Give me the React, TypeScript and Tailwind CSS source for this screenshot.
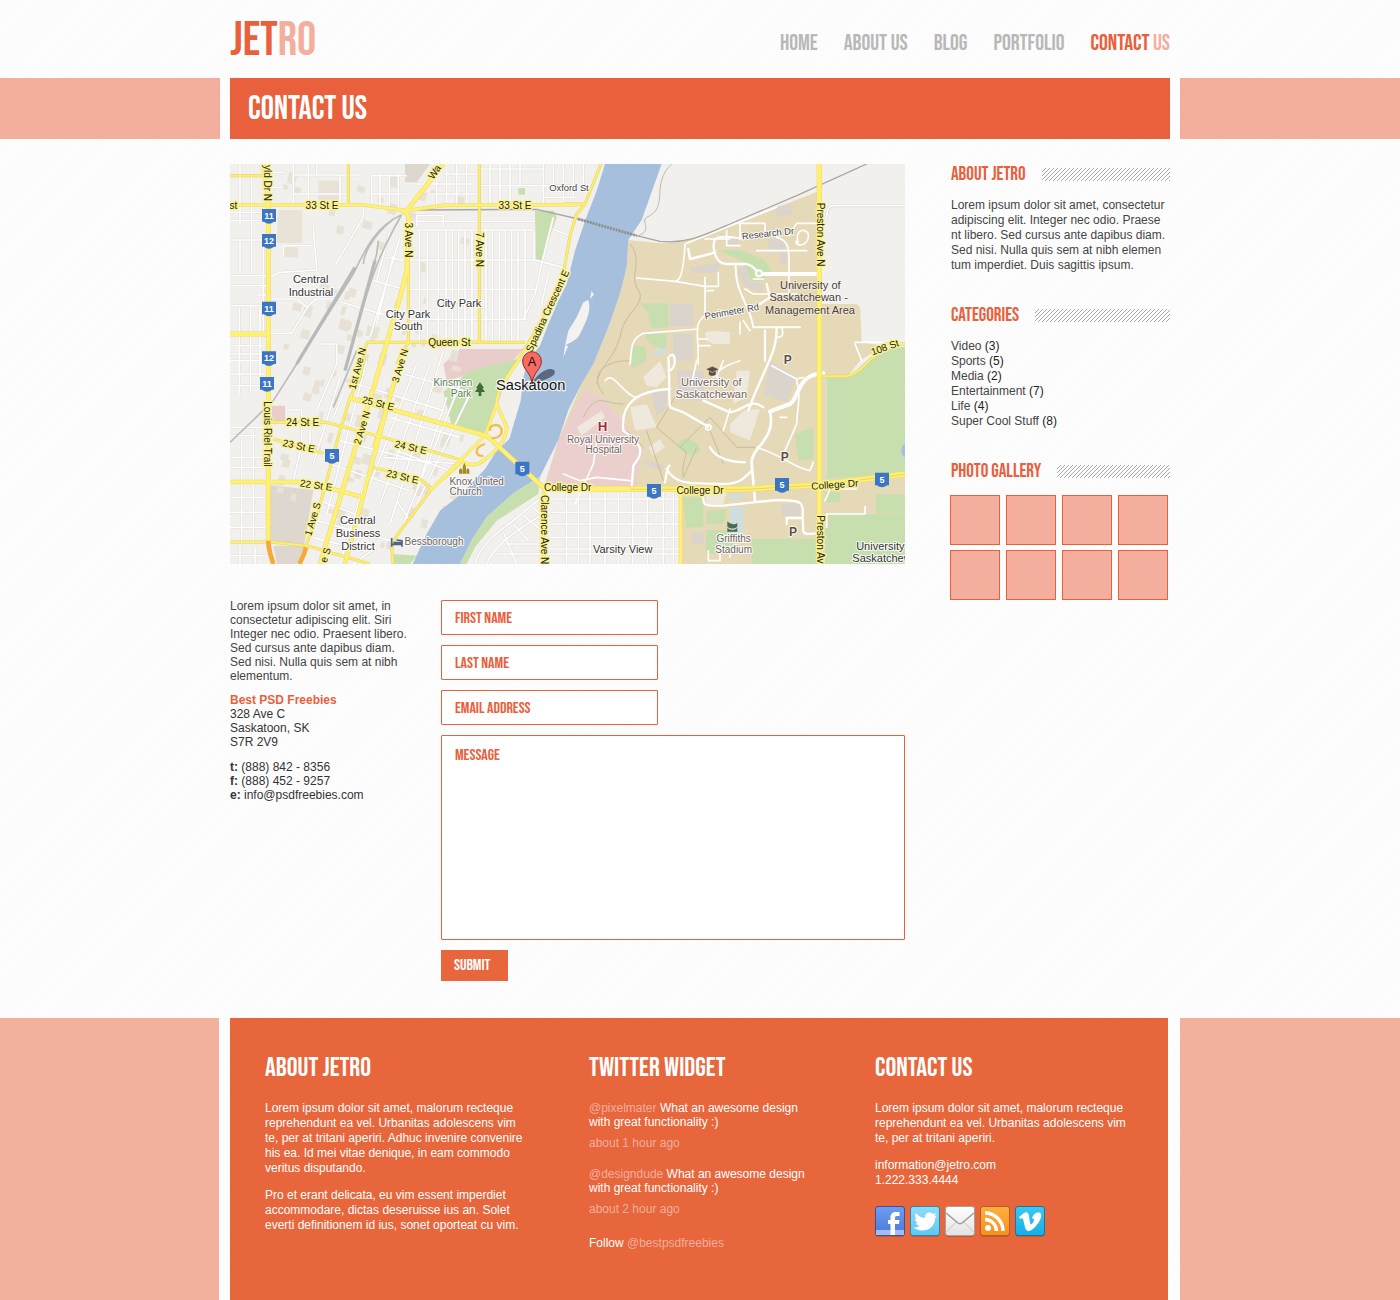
import type { ReactNode } from 'react';

const display = "font-['Bebas_Neue','Oswald',sans-serif] uppercase";

/* ---------- map ---------- */

type Line = [string, number?];

const streets: string[] = [
  // left blocks
  'M30 0V180M65 20V225M100 235V520', 'M0 145H100M0 170H100M0 228H110M0 335H115M0 365H110M80 393H115M0 425H110M0 545H115M0 570H110M0 590H110',
  'M30 230V330M65 230V330M28 430V690M62 425V690M90 430V640M0 630H110M0 665H110',
  'M0 790H110M0 815H80M35 820V1140M70 800V1140M0 880H110M0 910H110M0 1000H110M0 1045H110M0 1090H110M0 1175H120M30 1150V1200M75 1150V1200',
  // north of 33 St
  'M120 25H160M120 70H160M190 0V125M190 33H395M235 0V125M190 90H350M260 0V35M330 35V125M425 35V125M450 30V125M478 30V125M505 30V125M425 35H530M425 90H530',
  'M560 60H740M600 90H740M620 30V125M650 10V125M680 0V125M710 0V125M640 30H740M750 65H1040M780 0V125M810 0V125M840 0V125M870 0V65M750 15H940M940 0V125M970 0V65M1000 0V110M1030 0V100M1060 0V80M940 100H1040',
  // yard roads
  'M395 128C410 150 395 165 385 185L318 300', 'M120 340L150 325 260 318 250 190M160 245H250M160 245V275', 'M120 508H185L235 425 260 405H330M120 405H200L235 432',
  'M333 414L460 452', 'M510 220L420 520M430 350L520 375M480 280L520 290M490 275L440 480',
  // downtown slant
  'M480 200L440 350M265 540H320V600L260 740M340 690L310 760M170 738H215V845M170 738V775M215 845L190 950M240 800V860',
  'M560 600L420 960M600 600L450 1020M640 560L480 1080M690 660L520 1080M720 690L560 1020M650 700L560 980M520 630L700 680M380 660L640 740M480 760L690 820M460 880L690 900M500 860L660 920M330 830L600 900M300 900L540 980M270 1010L400 1060M260 1070L480 1130M330 640L250 900M500 1010L540 1070',
  'M410 590L290 1050M500 640L330 1200M250 1120L400 1160M440 1150L370 1200',
  // central grid
  'M560 188V155H640V188M560 172H740M750 172H910M560 198H910M540 288H920M540 376H920M540 466H890M920 290L1000 310',
  'M568 200V535M592 200V535M625 200V535M648 200V535M667 200V535M686 200V535M705 200V535M726 200V535M768 200V535M787 200V535M808 200V535M826 200V535M845 200V535M864 200V535M885 200V465M912 200V285',
  'M970 160L935 300 915 390 880 465M968 195L1020 215M955 330L935 420',
  // south east grid
  'M735 1200C745 1160 780 1120 830 1085L935 1000M770 1200C790 1150 840 1110 940 1050M820 1105L860 1200M850 1080L895 1130M880 1055L935 1100M910 1030L940 1060M800 1170H1350M830 1140H930',
  'M960 1005H1350M960 1045H1350M960 1080H1350M960 1120H1350M960 1155H1350M1010 980V1200M1045 985V1200M1080 985V1200M1125 985V1200M1165 985V1200M1208 985V1200M1252 985V1200M1300 985V1200M1330 985V1200',
];

const campus: Line[] = [
  ['M1365 240C1360 330 1350 350 1335 352L1220 342M1335 352L1425 367M1365 240L1640 130', 5],
  ['M1425 340V455M1425 367H1465V325M1425 380H1450'],
  ['M1375 255L1380 285 1440 270 1455 265M1455 225C1445 250 1455 300 1490 300H1545C1570 300 1580 325 1590 328', 7],
  ['M1455 225C1470 212 1510 220 1540 225', 6], ['M1425 225H1500M1490 200V245H1530M1530 175V225M1530 178H1605V215', 5],
  ['M1640 220C1690 230 1675 280 1677 390M1580 260H1730M1677 215L1700 178H1765', 5],
  ['M1590 330H1770', 12],
  ['M1517 305C1515 390 1560 420 1570 490H1640M1640 490H1710', 6],
  ['M1570 390H1700M1545 375L1570 390M1570 345H1600'],
  ['M1425 455C1390 480 1405 500 1405 600M1405 495L1240 508C1200 525 1205 560 1200 600M1405 525H1430M1405 545H1440'],
  ['M1640 490C1640 560 1620 580 1570 700L1555 740M1590 420L1620 400 1610 360M1605 590V500', 7],
  ['M1540 470L1560 500M1530 475V510M1655 490C1665 520 1650 520 1640 520'],
  ['M1315 580C1320 630 1315 700 1320 730L1360 745 1435 788M1320 575C1340 560 1340 620 1315 620', 7],
  ['M1780 628C1700 630 1710 700 1680 720L1620 742', 12], ['M1620 742C1640 830 1560 850 1565 900L1575 1010', 8],
  ['M1180 800C1170 710 1230 680 1320 675M1420 710L1500 745C1540 740 1560 700 1600 730M1180 800C1250 850 1235 870 1210 905L1205 970', 7],
  ['M1500 735L1480 800M1450 640C1470 610 1500 600 1530 590M1400 588L1385 660M1480 590L1460 640M1625 605L1700 645 1720 640'],
  ['M1580 850C1650 870 1690 910 1740 920L1750 895M1700 650C1715 700 1700 740 1700 780L1665 860M1650 760L1670 760'],
  ['M1440 850C1460 890 1520 895 1545 895M1310 915C1340 970 1400 955 1480 960C1530 960 1545 940 1565 920', 7],
  ['M1305 955C1310 930 1310 910 1318 905M1418 985C1420 1030 1420 1025 1480 1025L1570 1015 1640 1008C1720 1008 1720 1015 1718 1060L1720 1100C1720 1115 1750 1108 1765 1108M1718 1062H1670V1080', 7],
  ['M1125 650C1150 620 1170 680 1215 700M1100 830L1090 900 1035 1020M1000 930L1050 950 1100 940 1200 950', 5],
  ['M1790 1090V1050H1905V1028M1785 1010L1800 975H1880', 5],
  ['M1875 535H1960M1875 540L1895 590'],
  ['M1435 1160V1190H1470V1165M1500 1180V1150'],
];

const paleRoads: string[] = [
  'M1120 690C1080 640 1110 590 1200 590M1200 240C1240 290 1200 330 1220 370C1260 420 1180 440 1170 520C1150 590 1110 600 1100 660',
  'M1340 690L1280 790 1350 850 1440 760 1520 850 1580 850M1250 800L1300 950M1350 850C1390 870 1350 880 1360 940L1400 850',
  'M1190 800L1240 850M1440 800L1480 900M1060 760C1100 680 1120 720 1180 720',
];

const yellowThin: string[] = [
  'M0 35H100M355 0V125', 'M748 0V535M748 535H410', 'M535 160V537', 'M410 537L390 640 360 702 330 800 290 950 262 1050 228 1145',
  'M500 640L430 850M120 775H290L460 820 530 840 700 890M130 825L280 868M430 910L570 945 605 975',
  'M500 600L535 535M1020 215L1040 150 1065 120 1113 0M1000 330L1020 215M1000 330L940 460 870 580 830 640',
  'M605 975L500 1115 485 1150 490 1200M0 1134H120L230 1145 420 1200', 'M1775 637H1850C1890 625 1905 600 1930 580L1970 540H2025', 'M1000 120H1065M605 975L700 890M885 535H740',
];

const yellowWide: Line[] = [
  ['M100 0L115 110V1130', 12], ['M0 123H400L530 140 640 124 1045 122', 8], ['M530 140L640 0', 11], ['M515 140C540 150 537 160 535 200L530 320 510 400 440 640 270 1200', 11],
  ['M490 660L345 1200', 10], ['M0 510H115', 12], ['M0 954H230L400 1000', 10], ['M360 702L490 738 770 815 945 975', 11],
  ['M870 585C830 640 800 680 800 720L765 815 600 980', 7], ['M800 720L830 790C830 830 800 860 760 890 740 905 720 905 700 895', 8],
  ['M940 975H1350L1550 975 1770 962 2025 930', 15], ['M942 975V1200', 8], ['M1768 0V1200', 13], ['M1352 980V1200', 9],
];

const seeded = (n: number) => {
  const v = Math.sin(n * 127.1) * 43758.5453;
  return v - Math.floor(v);
};

const buildings = Array.from({ length: 110 }, (_, i) => ({
  x: 140 + seeded(i + 1) * 560,
  y: 20 + seeded(i + 200) * 1150,
  w: 10 + seeded(i + 400) * 20,
  h: 12 + seeded(i + 600) * 24,
}));

type Label = { t: string; x: number; y: number; s?: number; r?: number; k?: 'road' | 'poi' | 'street' | 'area' };

const labels: Label[] = [
  { t: '33 St E', x: 276, y: 134, k: 'road' }, { t: '33 St E', x: 855, y: 134, k: 'road' }, { t: 'st', x: 10, y: 134, k: 'road' },
  { t: 'yld Dr N', x: 101, y: 57, r: 90, k: 'road' }, { t: '3 Ave N', x: 526, y: 228, r: 90, k: 'road' }, { t: '7 Ave N', x: 737, y: 257, r: 90, k: 'road' },
  { t: 'Wa', x: 622, y: 30, r: -55, k: 'road' }, { t: 'Queen St', x: 658, y: 546, k: 'road' }, { t: 'Spadina Crescent E', x: 962, y: 445, r: -65, k: 'road' },
  { t: 'Louis Riel Trail', x: 101, y: 810, r: 90, k: 'road' }, { t: '1st Ave N', x: 392, y: 616, r: -75, k: 'road' }, { t: '3 Ave N', x: 520, y: 608, r: -73, k: 'road' },
  { t: '25 St E', x: 442, y: 728, r: 14, k: 'road' }, { t: '24 St E', x: 218, y: 785, k: 'road' }, { t: '23 St E', x: 204, y: 856, r: 12, k: 'road' },
  { t: '2 Ave N', x: 406, y: 794, r: -73, k: 'road' }, { t: '24 St E', x: 540, y: 860, r: 13, k: 'road' }, { t: '23 St E', x: 515, y: 948, r: 13, k: 'road' },
  { t: '22 St E', x: 257, y: 974, r: 8, k: 'road' }, { t: '1 Ave S', x: 258, y: 1068, r: -73, k: 'road' }, { t: 'e S', x: 296, y: 1176, r: -73, k: 'road' },
  { t: 'College Dr', x: 1013, y: 982, k: 'road' }, { t: 'College Dr', x: 1410, y: 990, k: 'road' }, { t: 'College Dr', x: 1815, y: 972, r: -4, k: 'road' },
  { t: 'Clarence Ave N', x: 934, y: 1097, r: 90, k: 'road' }, { t: 'Preston Ave N', x: 1762, y: 212, r: 90, k: 'road' }, { t: 'Preston Av', x: 1762, y: 1126, r: 90, k: 'road' },
  { t: '108 St', x: 1968, y: 560, r: -20, k: 'road' },
  { t: 'Oxford St', x: 1017, y: 82, k: 'street', s: 28 }, { t: 'Research Dr', x: 1615, y: 218, r: -6, k: 'street', s: 28 }, { t: 'Perimeter Rd', x: 1507, y: 452, r: -10, k: 'street', s: 28 },
  { t: 'Central', x: 242, y: 358 }, { t: 'Industrial', x: 243, y: 395 }, { t: 'City Park', x: 687, y: 428 }, { t: 'City Park', x: 534, y: 461 }, { t: 'South', x: 534, y: 498 },
  { t: 'Central', x: 383, y: 1081 }, { t: 'Business', x: 384, y: 1120 }, { t: 'District', x: 384, y: 1157 },
  { t: 'Varsity View', x: 1178, y: 1166 },
  { t: 'University of', x: 1741, y: 374, k: 'area' }, { t: 'Saskatchewan -', x: 1736, y: 412, k: 'area' }, { t: 'Management Area', x: 1740, y: 450, k: 'area' },
  { t: 'University', x: 1951, y: 1158 }, { t: 'Saskatchew', x: 1956, y: 1194 },
  { t: 'University of', x: 1444, y: 665, k: 'poi', s: 33 }, { t: 'Saskatchewan', x: 1444, y: 701, k: 'poi', s: 33 },
  { t: 'Royal University', x: 1119, y: 836, k: 'poi' }, { t: 'Hospital', x: 1121, y: 868, k: 'poi' },
  { t: 'Griffiths', x: 1511, y: 1134, k: 'poi' }, { t: 'Stadium', x: 1511, y: 1167, k: 'poi' },
  { t: 'Knox United', x: 740, y: 962, k: 'poi' }, { t: 'Church', x: 707, y: 994, k: 'poi' }, { t: 'Bessborough', x: 612, y: 1142, k: 'poi' },
];

const shields = [
  ['11', 117, 156], ['12', 117, 231], ['11', 117, 434], ['12', 117, 583], ['11', 111, 660], ['5', 306, 876],
  ['5', 877, 914], ['5', 1272, 981], ['5', 1656, 963], ['5', 1956, 947],
] as const;

const labelFill = { road: '#222', street: '#444', poi: '#6f625c', area: '#4a403c' };

function MapLabel({ t, x, y, s, r, k }: Label) {
  return (
    <text
      x={x}
      y={y}
      textAnchor="middle"
      fontSize={s ?? (k === 'road' || k === 'poi' ? 30 : 33)}
      fill={k ? labelFill[k] : '#333'}
      stroke={k === 'road' ? '#fbf48a' : '#ffffff'}
      strokeOpacity={k === 'area' ? 0.4 : 0.9}
      strokeWidth={k === 'road' ? 9 : 6}
      strokeLinejoin="round"
      paintOrder="stroke"
      transform={r ? `rotate(${r} ${x} ${y})` : undefined}
    >
      {t}
    </text>
  );
}

function CityMap() {
  return (
    <svg viewBox="0 0 2025 1200" className="block w-full font-['Liberation_Sans',Arial,sans-serif]" role="img" aria-label="Map of Saskatoon">
      <rect width="2025" height="1200" fill="#f2f0ed" />
      <path d="M1195 228L1290 238 1350 234 1440 208 1770 80V420H1875Q1890 420 1891 440L1895 535 1960 545 1890 590 1850 640H1790V940L2025 925V1200H1350V985L940 975 985 828 1050 668 1090 600 1135 490 1190 308Z" fill="#e6d9b7" />
      <path d="M1065 673L1110 700 1180 770 1240 860 1215 970H945L985 828Z" fill="#ebcfcd" />
      <path d="M690 555H880L850 590 760 620 650 650 640 600ZM125 725H165V772H125Z" fill="#e9cdca" />
      <path d="M640 683L720 620 850 588 885 580 830 640 800 730 765 812 665 783Z" fill="#c7dfae" />
      <path d="M915 140H972L980 160 935 292 918 288ZM865 72H885V92H865Z" fill="#c7dfae" />
      <path d="M930 940L925 990 800 1070 735 1150 710 1200H690L725 1128 770 1058 850 988ZM490 1170L560 1175 540 1200H485Z" fill="#c7dfae" />
      <path d="M1790 640H1855L1900 600 1950 555 2025 548V925L1790 945ZM1938 990H2025V1048H1938ZM1795 1050H2025V1200H1785V1090H1795ZM1785 985H1830V1015H1785ZM1565 1125H1765V1200H1565Z" fill="#c7dfae" />
      <path d="M1358 1000H1420V1090H1368ZM1430 1040L1490 1035 1480 1080H1430ZM1428 1098H1510V1170H1428ZM1230 418H1315V490L1265 493 1250 440ZM1245 510H1312L1305 560 1255 535ZM1205 545H1245L1250 590 1205 615ZM1462 258H1530L1600 285 1625 320 1595 350 1565 350 1535 290ZM1695 810L1750 790V885L1705 890Z" fill="#c7dfae" />
      <ellipse cx="1377" cy="849" rx="34" ry="22" transform="rotate(20 1377 849)" fill="#c7dfae" />
      <path d="M120 963L250 978 222 1145 120 1135ZM525 0H600L560 55H525ZM130 1145H225L200 1200H140Z" fill="#ded7d0" />
      <path d="M145 138H217V237H140ZM265 50H330V110H265ZM165 250H205V280H165Z" fill="#e9e2d6" />
      <path d="M1320 420H1390V485H1320ZM1330 510H1390V590H1330ZM1490 225H1525V250H1490ZM1615 225H1670V258H1615ZM1650 260H1670V300H1650ZM1525 310H1550L1560 350 1595 360V385L1550 370 1525 340ZM1620 590L1700 640 1670 715 1600 690ZM1260 675H1310V730L1280 755ZM1340 620H1420V710H1350ZM1655 1020H1710V1055H1655ZM1385 1105H1420V1140H1385ZM1635 130L1680 120 1690 150 1640 160ZM1380 310L1470 298 1465 325 1385 328ZM1245 890L1305 905 1295 920 1250 905Z" fill="#dad4cc" />
      <path d="M1240 640L1290 590 1310 640 1280 670 1250 665ZM1425 505L1450 500 1500 505V540H1450L1430 530ZM1200 730L1250 720 1280 790 1215 800ZM1255 850L1290 825 1305 850 1270 875ZM1500 780L1540 740 1590 735 1560 830 1500 805ZM1040 790L1115 740 1125 760 1055 815ZM1425 980L1490 985 1480 1020H1430ZM1520 620L1560 620 1550 700 1510 720Z" fill="#efe8dc" />
      <path d="M1500 1030H1540V1110H1500ZM1270 560L1310 550V570L1270 575ZM1500 990H1535V1005H1500Z" fill="#cfdfe0" />
      <g fill="#e8e1d5">
        {buildings.map((b, i) => (
          <rect key={i} x={b.x} y={b.y} width={b.w} height={b.h} transform={`rotate(15 ${b.x} ${b.y})`} />
        ))}
      </g>
      <path d="M1125 0L1100 80 1067 165 1035 260 1010 360 985 410 955 480 930 545 895 590 880 640 872 710 838 825 800 860 765 915 700 985 630 1040 590 1110 548 1200H690L725 1128 770 1058 850 988 930 938 985 828 1015 738 1050 668 1090 600 1135 490 1170 388 1190 308 1195 228 1235 168 1267 78 1295 0Z" fill="#a5bfdd" />
      <path d="M880 560L870 700 835 825 800 860 790 830 805 730 840 640Z" fill="#f2f0ed" />
      <path d="M1085 380L1092 392 1080 405ZM1075 408C1085 440 1070 470 1050 510 1040 530 1020 535 1005 545L1015 500 1040 460 1060 415ZM1005 545L1000 580 1015 545Z" fill="#f4f2ef" />
      <path d="M2025 840C2010 845 2010 875 2025 880Z" fill="#a5bfdd" />
      <path d="M1325 0C1260 60 1320 130 1250 160 1230 170 1270 200 1225 215" fill="none" stroke="#bdb8b2" strokeWidth="3" />
      <g fill="none" strokeLinejoin="round">
        {streets.map((d) => <path key={d} d={d} stroke="#dfdad5" strokeWidth="8" />)}
        {streets.map((d) => <path key={d} d={d} stroke="#ffffff" strokeWidth="5" />)}
        <path d="M1775 170C1800 180 1780 125 1810 125H2025" stroke="#d9d5d0" strokeWidth="9" />
        <path d="M1775 170C1800 180 1780 125 1810 125H2025" stroke="#fff" strokeWidth="5" />
        {paleRoads.map((d) => <path key={d} d={d} stroke="#c9bc9f" strokeWidth="3" />)}
        {campus.map(([d, w]) => <path key={d} d={d} stroke="#fff" strokeWidth={w ?? 5} strokeLinecap="round" />)}
        <circle cx="1587" cy="328" r="9" fill="#cde0b8" stroke="#fff" strokeWidth="6" />
        <circle cx="1435" cy="790" r="8" stroke="#fff" strokeWidth="5" />
        <path d="M1705 235C1690 190 1740 190 1735 220 1730 245 1700 250 1697 232Z" stroke="#fff" strokeWidth="5" />
        <path d="M515 152C430 190 400 270 370 330L200 600M515 152C460 250 430 300 350 600M490 165C420 220 400 280 400 300M445 230L440 270 405 400M200 600L130 710 0 835M380 560L310 730" stroke="#bdbdbd" strokeWidth="5" />
        <path d="M375 310L200 600M435 290L345 620" stroke="#b9b9b9" strokeWidth="10" />
        <path d="M550 138L920 136 1045 165 1220 215 1290 232C1370 240 1420 215 1500 180L1700 95 1910 0" stroke="#a9a6a2" strokeWidth="4" />
        <path d="M1045 165L1220 215" stroke="#8b8f94" strokeWidth="9" strokeDasharray="5 4" />
        {yellowThin.map((d) => <path key={d} d={d} stroke="#e3cf6a" strokeWidth="9" />)}
        {yellowWide.map(([d, w]) => <path key={d} d={d} stroke="#ead772" strokeWidth={(w ?? 8) + 3} />)}
        {yellowThin.map((d) => <path key={d} d={d} stroke="#fdf069" strokeWidth="6" />)}
        {yellowWide.map(([d, w]) => <path key={d} d={d} stroke="#fef171" strokeWidth={w} />)}
        <path d="M1200 976H1350L1550 976 1770 963 2025 931" stroke="#dcc65c" strokeWidth="2" />
        <path d="M780 800C775 780 815 775 815 800 815 815 800 825 785 822M765 840C730 850 735 880 760 875" stroke="#f0c04c" strokeWidth="7" />
        <path d="M115 1130C115 1160 125 1180 130 1200M228 1150C222 1175 215 1185 208 1200" stroke="#f7a83a" strokeWidth="14" />
      </g>
      {labels.map((l) => <MapLabel key={`${l.t}${l.x}${l.y}`} {...l} />)}
      <g fontWeight="bold" textAnchor="middle">
        {shields.map(([n, x, y]) => (
          <g key={`${x}${y}`}>
            <path d={`M${x - 21} ${y - 21}H${x + 21}V${y + 17}H${x + 15}Q${x + 8} ${y + 23} ${x} ${y + 23}Q${x - 8} ${y + 23} ${x - 15} ${y + 17}H${x - 21}Z`} fill="#3b75c4" />
            <text x={x} y={y + 9} fontSize="27" fill="#fff">{n}</text>
          </g>
        ))}
        <g fill="#5a4d45" stroke="#fff" strokeWidth="5" paintOrder="stroke" fontSize="36">
          <text x="1673" y="600">P</text>
          <text x="1664" y="892">P</text>
          <text x="1689" y="1117">P</text>
          <text x="1118" y="802" fill="#9c2f33" fontSize="40">H</text>
        </g>
      </g>
      <g fill="#5a7a55" stroke="#fff" strokeWidth="5" paintOrder="stroke" fontSize="30" textAnchor="end">
        <text x="727" y="667">Kinsmen</text>
        <text x="724" y="700">Park</text>
      </g>
      <path d="M750 655L762 672H757L765 684H754V696H746V684H735L743 672H738Z" fill="#3f6b3c" />
      <path d="M687 929V918L692 912 697 918V929ZM698 929V908L703 896 708 908V929ZM709 929V918L714 912 718 918V929Z" fill="#a98a1c" />
      <path d="M485 1122V1148M485 1141H516V1148M490 1136H516V1130L500 1128" fill="none" stroke="#4a6590" strokeWidth="5" />
      <path d="M1430 616L1447 608 1464 616 1447 624ZM1437 622V632Q1447 638 1457 632V622L1447 627ZM1462 617V630" fill="#5a4d45" stroke="#5a4d45" strokeWidth="1" />
      <path d="M1492 1072C1500 1080 1515 1085 1522 1076V1088C1515 1095 1500 1095 1492 1088ZM1492 1092Q1507 1104 1522 1092V1103H1492Z" fill="#4c6b50" />
      <path d="M908 655C925 625 960 605 974 620 980 640 935 650 908 658Z" fill="#3c4455" opacity=".7" />
      <text x="902" y="678" fontSize="44" textAnchor="middle" fill="#111" stroke="#fff" strokeOpacity=".8" strokeWidth="7" paintOrder="stroke">Saskatoon</text>
      <path d="M906 660C904 625 878 618 878 591A28 28 0 0 1 934 591C934 618 908 625 906 660Z" fill="#f8695f" stroke="#8e2a24" strokeWidth="3" />
      <text x="906" y="605" fontSize="38" textAnchor="middle" fill="#111">A</text>
    </svg>
  );
}

/* ---------- small parts ---------- */

function Lines({ text }: { text: string[] }) {
  return (
    <>
      {text.map((l) => (
        <span key={l} className="block whitespace-nowrap">{l}</span>
      ))}
    </>
  );
}

function Hatch() {
  return (
    <svg className="h-[13px] min-w-0 flex-1" width="100" height="13" aria-hidden="true" shapeRendering="crispEdges">
      <defs>
        <pattern id="hatch" width="4" height="4" patternUnits="userSpaceOnUse">
          <path d="M3 0h1v1h-1zM2 1h1v1h-1zM1 2h1v1h-1zM0 3h1v1h-1z" fill="#a8a8a8" />
        </pattern>
      </defs>
      <rect width="100%" height="13" fill="url(#hatch)" />
    </svg>
  );
}

function SideSection({ title, children }: { title: string; children: ReactNode }) {
  return (
    <section>
      <div className="mb-[13px] flex items-center gap-4 pl-px">
        <h2 className={`${display} pt-px text-[19px] leading-5 text-[#e8603c]`}>{title}</h2>
        <Hatch />
      </div>
      {children}
    </section>
  );
}

function FooterColumn({ title, children }: { title: string; children: ReactNode }) {
  return (
    <section>
      <h2 className={`${display} mb-[17px] text-[27px] leading-8`}>{title}</h2>
      {children}
    </section>
  );
}

function Field({ id, label }: { id: string; label: string }) {
  return (
    <input
      id={id}
      type="text"
      aria-label={label}
      placeholder={label}
      className={`${display} block h-[35px] w-full max-w-[217px] rounded-[1px] border border-[#e8603c] bg-white px-[13px] pt-[2px] text-base text-[#e8603c] placeholder:text-[#e8603c] placeholder:opacity-100`}
    />
  );
}

function Social({ name, top, bottom, border, children }: { name: string; top: string; bottom: string; border: string; children: ReactNode }) {
  return (
    <a href="#" aria-label={name}>
      <svg width="30" height="31" viewBox="0 0 30 31" className="block">
        <defs>
          <linearGradient id={`bg-${name}`} x2="0" y2="1">
            <stop stopColor={top} />
            <stop offset="1" stopColor={bottom} />
          </linearGradient>
        </defs>
        <rect x=".5" y="1.5" width="29" height="29" rx="2.5" fill="#000" opacity=".3" />
        <rect x=".5" y=".5" width="29" height="29" rx="2.5" fill={`url(#bg-${name})`} stroke={border} />
        {children}
      </svg>
    </a>
  );
}

const nav = ['Home', 'About us', 'Blog', 'Portfolio'];
const categories: [string, number][] = [['Video', 3], ['Sports', 5], ['Media', 2], ['Entertainment', 7], ['Life', 4], ['Super Cool Stuff', 8]];
const tweets = [
  { user: '@pixelmater', age: 'about 1 hour ago' },
  { user: '@designdude', age: 'about 2 hour ago' },
];

export default function App() {
  return (
    <div className="flex min-h-screen flex-col bg-[#fdfdfd] bg-[repeating-linear-gradient(135deg,#fbfbfb_0px,#fbfbfb_1px,#fdfdfd_1px,#fdfdfd_4px)] font-['Liberation_Sans',Arial,sans-serif] text-xs text-[#444]">
      <header className="mx-auto flex h-[78px] w-full max-w-[940px] items-center justify-between">
        <a href="#" className={`${display} pt-1 text-5xl leading-none text-[#e8603c]`}>
          Jet<span className="text-[#f3ae9d]">ro</span>
        </a>
        <nav className={`${display} flex gap-[26px] pt-[10px] text-[22px] leading-7 text-[#b8b8b8]`}>
          {nav.map((n) => <a key={n} href="#">{n}</a>)}
          <a href="#" aria-current="page" className="text-[#e8603c]">Contact <span className="text-[#f3ae9d]">us</span></a>
        </nav>
      </header>

      <div className="grid h-[61px] grid-cols-[minmax(0,1fr)_minmax(0,940px)_minmax(0,1fr)] gap-[10px]">
        <div className="bg-[#f3ae9d]" />
        <div className="flex items-center bg-[#e8603c] px-[18px] pt-[2px]">
          <h1 className={`${display} text-[33px] leading-none text-white`}>Contact us</h1>
        </div>
        <div className="bg-[#f3ae9d]" />
      </div>

      <main className="mx-auto flex w-full max-w-[940px] gap-[45px] pt-[25px] pb-[37px]">
        <div className="min-w-0 flex-1">
          <CityMap />
          <div className="mt-[35px] flex justify-between gap-6">
            <div className="leading-[14px]">
              <p>
                <Lines text={['Lorem ipsum dolor sit amet, in', 'consectetur adipiscing elit. Siri', 'Integer nec odio. Praesent libero.', 'Sed cursus ante dapibus diam.', 'Sed nisi. Nulla quis sem at nibh', 'elementum.']} />
              </p>
              <address className="mt-[10px] text-[#333] not-italic">
                <strong className="block text-[#e8603c]">Best PSD Freebies</strong>
                <Lines text={['328 Ave C', 'Saskatoon, SK', 'S7R 2V9']} />
                <div className="mt-[11px]">
                  <div><b>t:</b> (888) 842 - 8356</div>
                  <div><b>f:</b> (888) 452 - 9257</div>
                  <div><b>e:</b> info@psdfreebies.com</div>
                </div>
              </address>
            </div>
            <form className="flex w-full max-w-[464px] flex-col items-start gap-[10px] pt-px" onSubmit={(e) => e.preventDefault()}>
              <Field id="first-name" label="First name" />
              <Field id="last-name" label="Last name" />
              <Field id="email" label="Email address" />
              <textarea
                id="message"
                aria-label="Message"
                placeholder="Message"
                className={`${display} block h-[205px] w-full resize-none rounded-[1px] border border-[#e8603c] bg-white px-[13px] py-2 text-base text-[#e8603c] placeholder:text-[#e8603c] placeholder:opacity-100`}
              />
              <button type="submit" className={`${display} h-[31px] min-w-[67px] bg-[#e7663c] pr-4 pl-[13px] pt-px text-left text-base text-white`}>Submit</button>
            </form>
          </div>
        </div>

        <aside className="flex w-[220px] shrink-0 flex-col gap-8">
          <SideSection title="About Jetro">
            <p className="pl-px leading-[15px]">
              <Lines text={['Lorem ipsum dolor sit amet, consectetur', 'adipiscing elit. Integer nec odio. Praese', 'nt libero. Sed cursus ante dapibus diam.', 'Sed nisi. Nulla quis sem at nibh elemen', 'tum imperdiet. Duis sagittis ipsum.']} />
            </p>
          </SideSection>
          <SideSection title="Categories">
            <ul className="pl-px leading-[15px]">
              {categories.map(([name, count]) => (
                <li key={name}><a href="#">{name} <span className="text-[#222]">({count})</span></a></li>
              ))}
            </ul>
          </SideSection>
          <SideSection title="Photo gallery">
            <ul className="grid grid-cols-[repeat(4,50px)] gap-x-[6px] gap-y-[5px]">
              {Array.from({ length: 8 }, (_, i) => (
                <li key={i}>
                  <a href="#" aria-label={`Photo ${i + 1}`} className="block h-[50px] border border-[#e8603c] bg-[#f3ae9d]" />
                </li>
              ))}
            </ul>
          </SideSection>
        </aside>
      </main>

      <footer className="grid flex-1 grid-cols-[minmax(0,1fr)_minmax(0,940px)_minmax(0,1fr)] gap-[10px]">
        <div className="mr-px bg-[#f3b09c]" />
        <div className="mr-[2px] grid grid-cols-[324fr_286fr_293fr] bg-[#e7663c] pt-[34px] pb-12 pl-[35px] text-white">
          <FooterColumn title="About Jetro">
            <p className="leading-[15px]">
              <Lines text={['Lorem ipsum dolor sit amet, malorum recteque', 'reprehendunt ea vel. Urbanitas adolescens vim', 'te, per at tritani aperiri. Adhuc invenire convenire', 'his ea. Id mei vitae denique, in eam commodo', 'veritus disputando.']} />
            </p>
            <p className="mt-3 leading-[15px]">
              <Lines text={['Pro et erant delicata, eu vim essent imperdiet', 'accommodare, dictas deseruisse ius an. Solet', 'everti definitionem id ius, sonet oporteat cu vim.']} />
            </p>
          </FooterColumn>
          <FooterColumn title="Twitter widget">
            {tweets.map((t) => (
              <div key={t.user} className="mb-[17px] leading-[14px]">
                <p>
                  <a href="#" className="text-[#f3ae9d]">{t.user}</a> What an awesome design
                  <br />
                  with great functionality :)
                </p>
                <p className="mt-[7px] text-[#f3ae9d]">{t.age}</p>
              </div>
            ))}
            <p className="leading-5">Follow <a href="#" className="text-[#f3ae9d]">@bestpsdfreebies</a></p>
          </FooterColumn>
          <FooterColumn title="Contact us">
            <p className="leading-[15px]">
              <Lines text={['Lorem ipsum dolor sit amet, malorum recteque', 'reprehendunt ea vel. Urbanitas adolescens vim', 'te, per at tritani aperiri.']} />
            </p>
            <p className="mt-3 leading-[15px]">
              <Lines text={['information@jetro.com', '1.222.333.4444']} />
            </p>
            <div className="mt-[18px] flex gap-[5px]">
              <Social name="Facebook" top="#6e9df0" bottom="#4a78dc" border="#38529b">
                <path d="M1 24H29V29H1Z" fill="#a3bdf2" />
                <path d="M15.5 29V18H13V14H15.5V11.500C15.5 8 17.500 6 21 6H24.500V10H22C20.500 10 20 10.500 20 12V14H24.500L24 18H20V29Z" fill="#fff" />
              </Social>
              <Social name="Twitter" top="#8fdcfb" bottom="#5fc6f1" border="#2f86a8">
                <path d="M3 21.500C6 22 8 21 9.500 20 7.500 19.500 6.500 18.500 6 17H8C6 16 5 14.500 5 12.500L7 13C5 11.500 4.500 9 6 7 8.500 10 11 11.500 15 12 14.500 8.500 17 6.500 19.500 6.500 21 6.500 22 7 23 8L26 7 24.500 10 27 9.500 25 12.500C25 20 19 24.500 12.500 24.500 8.500 24.500 5 23 3 21.500Z" fill="#fff" />
              </Social>
              <Social name="Email" top="#ffffff" bottom="#e2e2e2" border="#a9a19c">
                <path d="M1.500 26L11 16M28.500 26L19 16" stroke="#c3c3c3" fill="none" />
                <path d="M1 7L13 17Q15 18.500 17 17L29 7" stroke="#9a9a9a" strokeWidth="1.500" fill="none" />
              </Social>
              <Social name="RSS" top="#fdb040" bottom="#f78f1e" border="#b0621a">
                <circle cx="8" cy="22" r="3" fill="#fff" />
                <path d="M5 13.500A11.500 11.500 0 0 1 16.500 25M5 7A18 18 0 0 1 23 25" stroke="#fff" strokeWidth="3.500" fill="none" />
              </Social>
              <Social name="Vimeo" top="#3cc8f2" bottom="#17ade4" border="#16789d">
                <path d="M4 11L9 7C12 5 13.500 7 14 10L15 16C15.500 19 16.500 19 18 16.500 19.500 14 19.500 12 17 12.500 18 8.500 20.500 6 24 6.500 27 7 26.500 11 25 14 22.500 19 17.500 24.500 14 25 10.500 25.500 10 21 9 17 8 12.500 8 11.500 5.500 13Z" fill="#fff" />
              </Social>
            </div>
          </FooterColumn>
        </div>
        <div className="bg-[#f3b09c]" />
      </footer>
    </div>
  );
}
